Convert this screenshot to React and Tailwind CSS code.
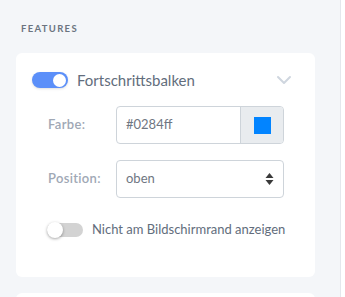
import { ChevronDown } from "lucide-react";

export default function App() {
  return (
    <div className="bg-white w-[345px] h-[297px] overflow-hidden" style={{ fontFamily: "Lato, 'Noto Sans', sans-serif" }}>
      <div className="w-[341px] h-full bg-[#f4f6f9] border-r border-[#e4e7ec] pl-4 pr-[25px] pt-[23px]">
        <div className="pl-[5px] text-[9.5px] font-bold tracking-[0.14em] text-[#6b7480] leading-[12px]">
          FEATURES
        </div>

        {/* Card */}
        <div className="mt-[18px] bg-white rounded-md h-[224px] pl-4 pr-[31px] pt-[19px]">
          <div className="flex items-center h-[16px]">
            <div className="w-[36px] h-[16px] rounded-full bg-[#5b8ff9] flex items-center justify-end pr-[2px] shadow-sm">
              <div className="w-[13px] h-[13px] rounded-full bg-white" />
            </div>
            <span className="ml-[9px] text-[15px] text-[#626d7c] leading-none">Fortschrittsbalken</span>
            <ChevronDown className="ml-auto -mr-[12px] w-[24px] h-[24px] text-[#cfd6df]" strokeWidth={2} />
          </div>

          <div className="mt-[18px] flex items-center">
            <label className="w-[84px] shrink-0 pl-4 text-[13px] font-semibold text-[#a0a8b5] tracking-wide">Farbe:</label>
            <div className="flex h-[38px] w-[168px] border border-[#ced4da] rounded-[4px] overflow-hidden">
              <div className="flex-1 flex items-center pl-[9px] text-[13px] text-[#6f7682]">#0284ff</div>
              <div className="w-[43px] bg-[#e9ecef] border-l border-[#ced4da] flex items-center justify-center">
                <div className="w-[17px] h-[17px] bg-[#0284ff]" />
              </div>
            </div>
          </div>

          <div className="mt-[16px] flex items-center">
            <label className="w-[84px] shrink-0 pl-4 text-[13px] font-semibold text-[#a0a8b5] tracking-wide">Position:</label>
            <div className="flex items-center h-[38px] w-[168px] border border-[#ced4da] rounded-[4px] pl-[9px] pr-[9px]">
              <span className="flex-1 text-[13px] text-[#6f7682]">oben</span>
              <svg width="9" height="14" viewBox="0 0 9 14">
                <path d="M4.5 1 L8.5 6 L0.5 6 Z" fill="#3a3a3a" />
                <path d="M4.5 13 L8.5 8 L0.5 8 Z" fill="#3a3a3a" />
              </svg>
            </div>
          </div>

          <div className="mt-[22px] flex items-center pl-[15px]">
            <div className="relative w-[36px] h-[16px] shrink-0 flex items-center">
              <div className="w-[36px] h-[14px] rounded-full bg-[#d3d3d3]" />
              <div className="absolute left-0 w-[16px] h-[16px] rounded-full bg-white shadow-[0_1px_3px_rgba(0,0,0,0.35)]" />
            </div>
            <span className="ml-[9px] whitespace-nowrap text-[13px] text-[#626d7c]">Nicht am Bildschirmrand anzeigen</span>
          </div>
        </div>

        <div className="mt-4 bg-white rounded-md h-[40px]" />
      </div>
    </div>
  );
}
